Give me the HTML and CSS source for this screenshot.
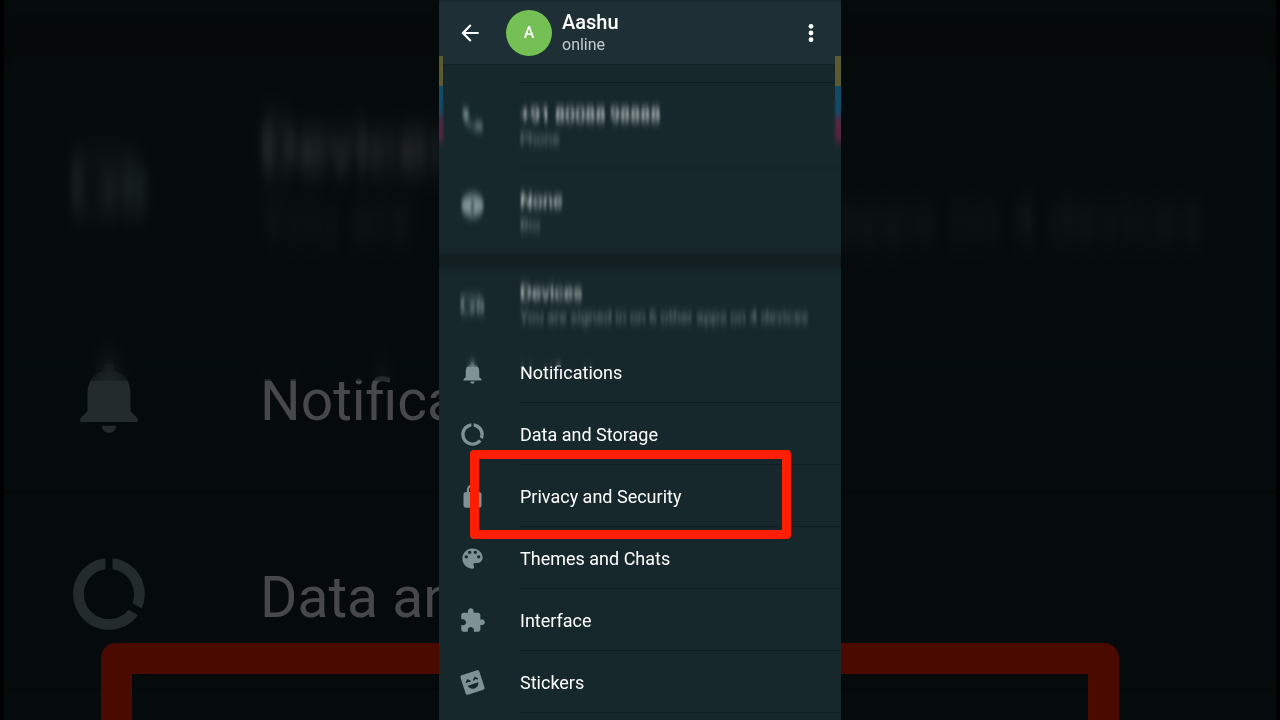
FILE: index.html
```html
<!DOCTYPE html>
<html lang="en">

<head>
    <meta charset="UTF-8">
    <meta name="viewport" content="width=device-width, initial-scale=1">
    <title>Settings</title>
    <link rel="stylesheet" href="styles.css">
</head>

<body>
    <!-- shared icons and the two smear filters -->
    <svg class="defs" aria-hidden="true">
        <filter id="smear" x="0" y="0" width="1" height="1" color-interpolation-filters="sRGB">
            <feGaussianBlur stdDeviation="1.3 5" />
        </filter>
        <filter id="smear-big" x="0" y="0" width="1" height="1" color-interpolation-filters="sRGB">
            <feGaussianBlur stdDeviation="5 16" />
        </filter>
        <symbol id="devices" viewBox="0 0 24 24">
            <path d="M3 5h17v2H4v10h5v2H2V5zM22 9v10h-6V9zM18 11v6h2v-6zM10 11h4v8h-4zM11.500 13v4h1v-4z" fill-rule="evenodd" />
        </symbol>
        <symbol id="bell" viewBox="0 0 24 24">
            <path d="M12 22c1.1 0 2-.9 2-2h-4c0 1.1.89 2 2 2zm6-6v-5c0-3.07-1.64-5.64-4.5-6.32V4c0-.83-.67-1.5-1.5-1.5s-1.5.67-1.5 1.5v.68C7.63 5.36 6 7.92 6 11v5l-2 2v1h16v-1l-2-2z" />
        </symbol>
        <symbol id="data" viewBox="0 0 24 24">
            <path d="M13 2.05v3.03c3.39.49 6 3.39 6 6.92 0 .9-.18 1.75-.48 2.54l2.6 1.53c.56-1.24.88-2.62.88-4.07 0-5.18-3.95-9.45-9-9.95zM12 19c-3.87 0-7-3.13-7-7 0-3.53 2.61-6.43 6-6.92V2.05c-5.06.5-9 4.76-9 9.95 0 5.52 4.47 10 9.99 10 3.31 0 6.24-1.61 8.06-4.09l-2.6-1.53C16.17 17.98 14.21 19 12 19z" />
        </symbol>
    </svg>

    <!-- enlarged dim copy of the list behind the phone -->
    <div class="backdrop" aria-hidden="true">
        <div class="big-gap"></div>
        <div class="big-row big-double">
            <svg class="big-icon"><use href="#devices" /></svg>
            <div class="big-text">
                <p>Devices</p>
                <p class="big-sub">You are</p>
            </div>
            <p class="big-sub big-end">apps on 4 devices</p>
        </div>
        <div class="big-row">
            <svg class="big-icon"><use href="#bell" /></svg>
            <div class="big-text"><p>Notifications</p></div>
        </div>
        <div class="big-row">
            <svg class="big-icon"><use href="#data" /></svg>
            <div class="big-text"><p>Data and Storage</p></div>
        </div>
        <div class="big-row">
            <div class="big-frame"></div>
        </div>
        <div class="big-veil"></div>
    </div>

    <main class="phone">
        <header class="topbar">
            <button class="iconbtn" aria-label="Back">
                <svg viewBox="0 0 24 24"><path d="M20 11H7.83l5.59-5.59L12 4l-8 8 8 8 1.41-1.41L7.83 13H20v-2z" /></svg>
            </button>
            <div class="avatar">A</div>
            <div class="who">
                <h1>Aashu</h1>
                <p>online</p>
            </div>
            <button class="iconbtn" aria-label="More options">
                <svg viewBox="0 0 24 24"><circle cx="12" cy="5.800" r="2.200" /><circle cx="12" cy="12" r="2.200" /><circle cx="12" cy="18.200" r="2.200" /></svg>
            </button>
        </header>

        <div class="stripes left"></div>
        <div class="stripes right"></div>

        <ul class="list account">
            <li>
                <a class="row double" href="#">
                    <svg class="icon" viewBox="0 0 24 24"><path d="M6.620 10.790c1.440 2.830 3.760 5.140 6.590 6.590l2.200-2.200c.27-.27.67-.36 1.020-.24 1.120.37 2.330.57 3.570.57.55 0 1 .45 1 1V20c0 .55-.45 1-1 1-9.390 0-17-7.610-17-17 0-.55.45-1 1-1h3.500c.55 0 1 .45 1 1 0 1.250.2 2.450.57 3.570.11.35.03.74-.25 1.020l-2.200 2.200z" /></svg>
                    <span class="text">+91 80088 98888<small>Phone</small></span>
                </a>
            </li>
            <li>
                <a class="row double" href="#">
                    <svg class="icon" viewBox="0 0 24 24"><path d="M12 2C6.480 2 2 6.480 2 12s4.480 10 10 10 10-4.480 10-10S17.520 2 12 2zm1 15h-2v-6h2v6zm0-8h-2V7h2v2z" /></svg>
                    <span class="text">None<small>Bio</small></span>
                </a>
            </li>
        </ul>

        <ul class="list settings">
            <li>
                <a class="row devices" href="#">
                    <svg class="icon"><use href="#devices" /></svg>
                    <span class="text">Devices<small>You are signed in on 6 other apps on 4 devices</small></span>
                </a>
            </li>
            <li>
                <a class="row" href="#">
                    <svg class="icon"><use href="#bell" /></svg>
                    <span class="text">Notifications</span>
                </a>
            </li>
            <li>
                <a class="row" href="#">
                    <svg class="icon"><use href="#data" /></svg>
                    <span class="text">Data and Storage</span>
                </a>
            </li>
            <li class="marked">
                <a class="row" href="#">
                    <svg class="icon" viewBox="0 0 24 24"><path d="M18 8h-1V6c0-2.760-2.240-5-5-5S7 3.240 7 6v2H6c-1.100 0-2 .9-2 2v10c0 1.100.9 2 2 2h12c1.100 0 2-.9 2-2V10c0-1.100-.9-2-2-2zM8.900 8V6c0-1.710 1.390-3.100 3.100-3.100s3.100 1.390 3.100 3.100v2z" /></svg>
                    <span class="text">Privacy and Security</span>
                </a>
            </li>
            <li>
                <a class="row" href="#">
                    <svg class="icon" viewBox="0 0 24 24"><path d="M12 3c-4.970 0-9 4.030-9 9s4.030 9 9 9c.83 0 1.500-.67 1.500-1.500 0-.39-.15-.74-.39-1.010-.23-.26-.38-.61-.38-.99 0-.83.67-1.500 1.500-1.500H16c2.760 0 5-2.240 5-5 0-4.420-4.030-8-9-8zm-5.500 9c-.83 0-1.500-.67-1.500-1.500S5.670 9 6.500 9 8 9.670 8 10.500 7.330 12 6.500 12zm3-4C8.670 8 8 7.330 8 6.500S8.670 5 9.500 5s1.500.67 1.500 1.500S10.330 8 9.500 8zm5 0c-.83 0-1.500-.67-1.500-1.500S13.670 5 14.500 5s1.500.67 1.500 1.500S15.330 8 14.500 8zm3 4c-.83 0-1.500-.67-1.500-1.500S16.670 9 17.500 9s1.500.67 1.500 1.500-.67 1.500-1.500 1.500z" /></svg>
                    <span class="text">Themes and Chats</span>
                </a>
            </li>
            <li>
                <a class="row" href="#">
                    <svg class="icon" viewBox="0 0 24 24"><path d="M20.500 11H19V7c0-1.100-.9-2-2-2h-4V3.500C13 2.120 11.880 1 10.500 1S8 2.120 8 3.500V5H4c-1.100 0-1.990.9-1.990 2v3.800H3.500c1.490 0 2.700 1.210 2.700 2.700s-1.210 2.700-2.700 2.700H2V20c0 1.100.9 2 2 2h3.800v-1.500c0-1.490 1.210-2.700 2.700-2.700 1.490 0 2.700 1.210 2.700 2.700V22H17c1.100 0 2-.9 2-2v-4h1.500c1.380 0 2.500-1.120 2.500-2.500S21.880 11 20.500 11z" /></svg>
                    <span class="text">Interface</span>
                </a>
            </li>
            <li>
                <a class="row" href="#">
                    <svg class="icon" viewBox="0 0 24 24">
                        <g transform="rotate(-18 12 12)">
                            <rect x="3.200" y="3" width="17.600" height="18" rx="1.600" />
                            <path class="cut" d="M7 13.400h10c-.5 2.600-2.500 4.200-5 4.200s-4.500-1.600-5-4.200z" />
                            <path class="cut-line" d="M6.600 10.600l2-2 2 2M13.400 10.600l2-2 2 2" />
                        </g>
                    </svg>
                    <span class="text">Stickers</span>
                </a>
            </li>
        </ul>

        <div class="veil"></div>
    </main>
</body>

</html>
```
FILE: styles.css
```css
* {
    box-sizing: border-box;
}

body {
    margin: 0;
    height: 100vh;
    position: relative;
    overflow: hidden;
    display: flex;
    justify-content: center;
    background-color: #000;
    font-family: Roboto, "Liberation Sans", sans-serif;
}

p,
h1,
ul {
    margin: 0;
    padding: 0;
}

.defs {
    position: absolute;
    width: 0;
    height: 0;
}

/* backdrop */
.backdrop {
    position: absolute;
    top: 0;
    bottom: 0;
    left: 4px;
    right: 4px;
    overflow: hidden;
    background-color: #050b0d;
    color: #474849;
}

.big-gap {
    height: 64px;
    border-top: 17px solid #050b0d;
    background-color: #050908;
}

.big-row {
    position: relative;
    display: flex;
    align-items: center;
    gap: 108px;
    height: 197px;
    padding: 8px 0 0 62px;
    border-bottom: 3px solid #040809;
}

.big-double {
    height: 232px;
    border-bottom: 0;
}

.big-icon {
    flex: none;
    width: 86px;
    height: 86px;
    fill: #242b2d;
}

.big-text {
    padding-top: 8px;
    font-size: 57px;
    line-height: 72px;
    white-space: nowrap;
}

/* labels stop at the edge of the phone */
.big-text p {
    width: calc(50vw - 461px);
    overflow: hidden;
}

.big-double .big-text {
    padding-top: 0;
}

.big-sub {
    font-size: 46px;
    line-height: 72px;
    color: #1d2224;
}

.big-end {
    align-self: flex-end;
    margin: 0 72px 40px auto;
    white-space: nowrap;
}

.big-frame {
    position: absolute;
    top: -47px;
    left: 97px;
    right: 157px;
    height: 281px;
    border: 31px solid #4a0a00;
    border-radius: 15px;
}

.big-veil {
    position: absolute;
    top: 0;
    left: 0;
    right: 0;
    height: 381px;
    backdrop-filter: url(#smear-big);
}

/* phone */
.phone {
    position: relative;
    width: 100%;
    max-width: 402px;
    overflow: hidden;
    background-color: #16282c;
    color: #fff;
}

.topbar {
    display: flex;
    align-items: center;
    height: 65px;
    padding: 0 16px 0 17px;
    border-top: 2px solid #16282c;
    border-bottom: 1px solid #132226;
    background-color: #1e3035;
}

.iconbtn {
    width: 28px;
    height: 28px;
    padding: 1px;
    border: 0;
    background: none;
    fill: #fff;
}

.iconbtn svg {
    display: block;
    width: 26px;
    height: 26px;
}

.avatar {
    width: 46px;
    height: 46px;
    margin: 0 10px 0 22px;
    border-radius: 50%;
    background-color: #74c054;
    font-size: 16px;
    font-weight: 500;
    line-height: 46px;
    text-align: center;
}

.who {
    flex: 1;
}

.who h1 {
    font-size: 20px;
    font-weight: 500;
    line-height: 24px;
}

.who p {
    font-size: 16px;
    line-height: 22px;
    color: #c3cdd0;
}

.stripes {
    position: absolute;
    top: 56px;
    height: 86px;
    background: linear-gradient(#5d5a2f 30px, #124b66 30px 60px, #562440 60px);
}

.left {
    left: 0;
    width: 4px;
}

.right {
    right: 0;
    width: 6px;
}

.list {
    list-style: none;
}

.list li {
    position: relative;
}

/* divider starts at the text column */
.list li::after {
    content: "";
    position: absolute;
    left: 81px;
    right: 0;
    bottom: 0;
    height: 1px;
    background-color: #0f1e22;
}

.account {
    margin-top: 17px;
    border-bottom: 12px solid #101a1b;
}

.account::before {
    content: "";
    display: block;
    height: 1px;
    margin-left: 81px;
    background-color: #0f1e22;
}

.account li:last-child::after {
    display: none;
}

.row {
    display: flex;
    align-items: center;
    gap: 34px;
    height: 62px;
    padding-left: 20px;
    color: #fff;
    text-decoration: none;
}

.double {
    height: 86px;
}

.devices {
    height: 74px;
}

.icon {
    flex: none;
    width: 27px;
    height: 27px;
    fill: #7d9396;
}

.double .icon {
    margin-bottom: 14px;
}

.text {
    padding-top: 2px;
    font-size: 18px;
    line-height: 24px;
    white-space: nowrap;
}

.text small {
    display: block;
    font-size: 14px;
    color: #869498;
}

.cut {
    fill: #16282c;
}

.cut-line {
    fill: none;
    stroke: #16282c;
    stroke-width: 1.4;
}

/* red frame round the marked row */
.marked::before {
    content: "";
    position: absolute;
    z-index: 1;
    top: -15px;
    bottom: -12px;
    left: 31px;
    right: 50px;
    border: 9px solid #ff1f00;
    border-radius: 4px;
    pointer-events: none;
}

.veil {
    position: absolute;
    top: 100px;
    left: 0;
    right: 0;
    height: 267px;
    backdrop-filter: url(#smear);
    pointer-events: none;
}
```
